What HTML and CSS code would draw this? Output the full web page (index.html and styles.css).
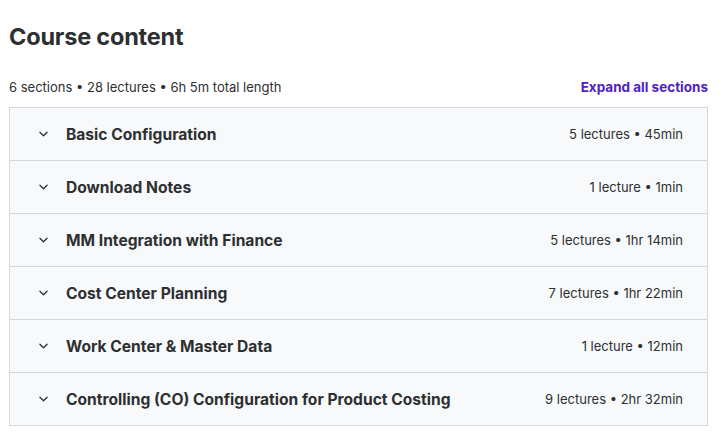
FILE: index.html
```html
<!DOCTYPE html>
<html>
<head>
<meta charset="utf-8">
<link rel="stylesheet" href="styles.css">
</head>
<body>
<div class="page">
  <h2 class="title">Course content</h2>
  <div class="meta">
    <span class="stats">6 sections • 28 lectures • 6h 5m total length</span>
    <span class="expand">Expand all sections</span>
  </div>
  <div class="panel">
    <div class="row"><svg class="chev" viewBox="0 0 10 6"><path d="M1 1l4 4 4-4"/></svg><span class="name">Basic Configuration</span><span class="info">5 lectures • 45min</span></div>
    <div class="row"><svg class="chev" viewBox="0 0 10 6"><path d="M1 1l4 4 4-4"/></svg><span class="name">Download Notes</span><span class="info">1 lecture • 1min</span></div>
    <div class="row"><svg class="chev" viewBox="0 0 10 6"><path d="M1 1l4 4 4-4"/></svg><span class="name">MM Integration with Finance</span><span class="info">5 lectures • 1hr 14min</span></div>
    <div class="row"><svg class="chev" viewBox="0 0 10 6"><path d="M1 1l4 4 4-4"/></svg><span class="name">Cost Center Planning</span><span class="info">7 lectures • 1hr 22min</span></div>
    <div class="row"><svg class="chev" viewBox="0 0 10 6"><path d="M1 1l4 4 4-4"/></svg><span class="name">Work Center &amp; Master Data</span><span class="info">1 lecture • 12min</span></div>
    <div class="row"><svg class="chev" viewBox="0 0 10 6"><path d="M1 1l4 4 4-4"/></svg><span class="name">Controlling (CO) Configuration for Product Costing</span><span class="info">9 lectures • 2hr 32min</span></div>
  </div>
</div>
</body>
</html>
```
FILE: styles.css
```css
html, body { margin: 0; padding: 0; background: #fff; }
body { font-family: "Inter", "Roboto", sans-serif; color: #2d2f31; }
.page { padding: 0 14px 0 9px; }
.title { margin: 0; padding-top: 22px; font-size: 23.5px; font-weight: 700; line-height: 30px; letter-spacing: -0.2px; }
.meta { display: flex; justify-content: space-between; align-items: center; margin-top: 25px; height: 20px; font-size: 13px; }
.stats { color: #2d2f31; }
.expand { color: #5022c3; font-weight: 700; font-size: 13.5px; }
.panel { margin-top: 10px; border: 1px solid #d1d7dc; }
.row { display: flex; align-items: center; height: 52px; background: #f7f9fa; padding: 0 24px 0 29px; font-size: 14px; }
.row + .row { border-top: 1px solid #d1d7dc; }
.chev { width: 9px; height: 6px; fill: none; stroke: #2d2f31; stroke-width: 1.4; stroke-linecap: round; stroke-linejoin: round; margin-right: 18px; }
.name { flex: 1; font-weight: 700; font-size: 15.6px; }
.info { font-size: 13px; }
```
